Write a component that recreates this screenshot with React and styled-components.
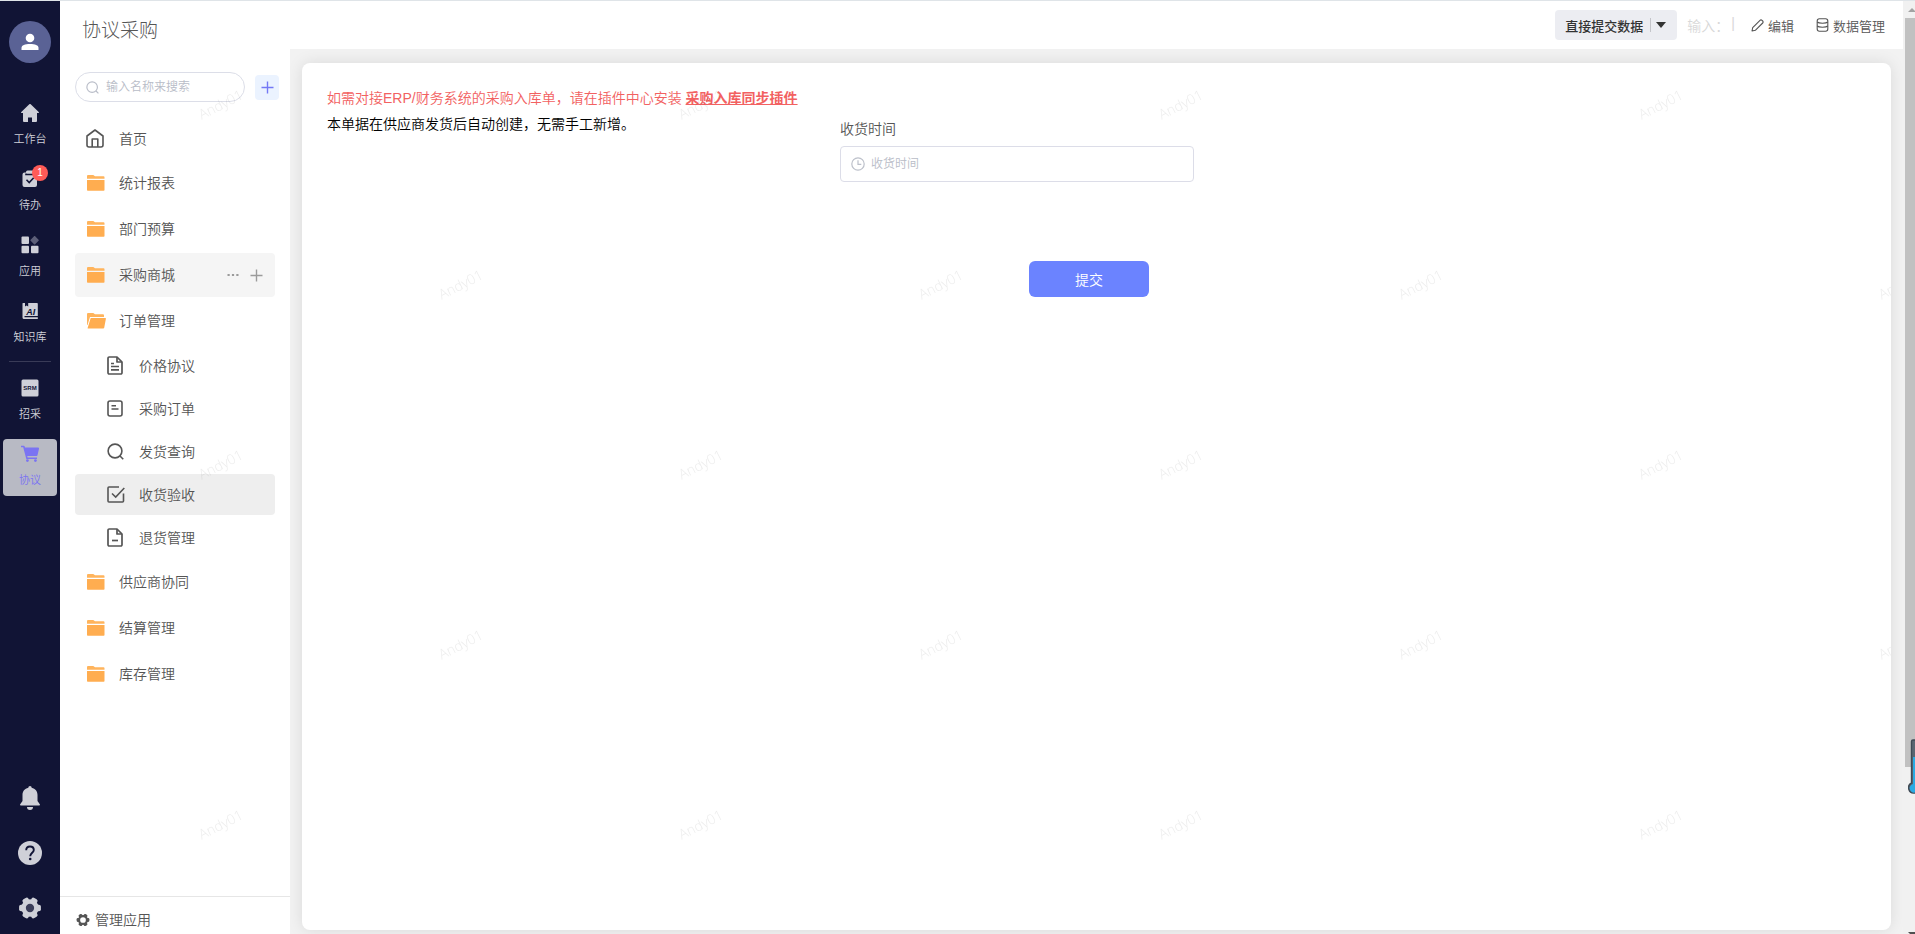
import React, { useState } from 'react';
import styled, { createGlobalStyle } from 'styled-components';

const GlobalStyle = createGlobalStyle`
  * {
    box-sizing: border-box;
  }
  body {
    margin: 0;
    font-family: "Liberation Sans", "Noto Sans CJK SC", sans-serif;
    font-size: 14px;
    font-weight: 350;
    color: #555;
  }
  button, input {
    font-family: inherit;
    font-weight: inherit;
    margin: 0;
  }
  a {
    color: inherit;
    text-decoration: none;
  }
  svg {
    display: block;
    flex-shrink: 0;
  }
`;

const Page = styled.div`
  position: relative;
  display: flex;
  height: 100vh;
  overflow: hidden;
  border-top: 1px solid #dfe4e8;
  background: #f2f2f2;
`;

/* ---------- dark rail ---------- */

const Rail = styled.nav`
  display: flex;
  flex-direction: column;
  align-items: center;
  flex-shrink: 0;
  width: 60px;
  padding: 20px 3px 14px;
  background: #111435;
  color: #cfd0d8;
`;

const Avatar = styled.button`
  display: flex;
  align-items: center;
  justify-content: center;
  flex-shrink: 0;
  width: 42px;
  height: 42px;
  margin-bottom: 35px;
  padding: 0;
  border: none;
  border-radius: 50%;
  background: #5a6295;
  cursor: pointer;
`;

const RailGroup = styled.div`
  display: flex;
  flex-direction: column;
  gap: 9px;
  width: 100%;
`;

const RailItem = styled.a`
  display: flex;
  flex-direction: column;
  align-items: center;
  gap: 8px;
  height: 57px;
  padding-top: 6px;
  border-radius: 4px;
  background: ${({ $active }) => ($active ? '#b8bac4' : 'transparent')};
  color: ${({ $active }) => ($active ? '#7b74f2' : '#cfd0d8')};
  font-size: 11px;
  line-height: 18px;
`;

const RailIcon = styled.span`
  position: relative;
  display: block;
`;

const Badge = styled.span`
  position: absolute;
  top: -5px;
  right: -9px;
  width: 16px;
  height: 16px;
  border-radius: 50%;
  background: #ff5b57;
  color: #fff;
  font-size: 10px;
  line-height: 16px;
  text-align: center;
`;

const RailDivider = styled.hr`
  width: 42px;
  margin: 8px 0 11px;
  border: none;
  border-top: 1px solid #393b57;
`;

const RailBottom = styled.div`
  display: flex;
  flex-direction: column;
  align-items: center;
  gap: 31px;
  margin-top: auto;
`;

const RailButton = styled.button`
  padding: 0;
  border: none;
  background: none;
  color: inherit;
  cursor: pointer;
`;

/* ---------- app sidebar ---------- */

const Sidebar = styled.aside`
  position: relative;
  display: flex;
  flex-direction: column;
  flex-shrink: 0;
  width: 230px;
  background: #fff;
`;

const AppTitle = styled.h1`
  margin: 0;
  padding: 16px 22px 0;
  font-size: 19px;
  font-weight: 300;
  line-height: 28px;
  color: #555;
`;

const SearchRow = styled.div`
  display: flex;
  align-items: center;
  gap: 10px;
  padding: 27px 11px 0 15px;
`;

const SearchBox = styled.label`
  display: flex;
  align-items: center;
  flex: 1;
  min-width: 0;
  gap: 7px;
  height: 30px;
  padding: 0 10px;
  border: 1px solid #dcdee8;
  border-radius: 15px;
  color: #b9bdc8;
`;

const PlainInput = styled.input`
  flex: 1;
  min-width: 0;
  padding: 0;
  border: none;
  outline: none;
  background: none;
  font-size: 12px;
  color: #555;
  &::placeholder {
    color: #b8bcc7;
    opacity: 1;
  }
`;

const AddButton = styled.button`
  display: flex;
  align-items: center;
  justify-content: center;
  flex-shrink: 0;
  width: 24px;
  height: 25px;
  padding: 0;
  border: none;
  border-radius: 4px;
  background: #ebf3ff;
  color: #7479f5;
  cursor: pointer;
`;

const Menu = styled.ul`
  display: flex;
  flex-direction: column;
  gap: 2px;
  flex: 1;
  margin: 0;
  padding: 16px 15px 0;
  list-style: none;
`;

const MenuRow = styled.li`
  display: flex;
  align-items: center;
  height: ${({ $folder }) => ($folder ? '44px' : '41px')};
  padding: 0 12px 0 ${({ $child }) => ($child ? '32px' : '11px')};
  border-radius: 4px;
  background: ${({ $bg }) => $bg || 'transparent'};
`;

const MenuLink = styled.a`
  display: flex;
  align-items: center;
  flex: 1;
  line-height: 20px;
  color: #555;
`;

const MenuIcon = styled.span`
  display: flex;
  width: ${({ $child }) => ($child ? '32px' : '33px')};
`;

const RowActions = styled.span`
  display: flex;
  align-items: center;
  gap: 11px;
  color: #9b9b9b;
`;

const RowAction = styled.button`
  padding: 0;
  border: none;
  background: none;
  color: inherit;
  cursor: pointer;
`;

const SidebarFooter = styled.a`
  display: flex;
  align-items: center;
  gap: 5px;
  padding: 13px 16px 4px;
  border-top: 1px solid #e6e6e6;
  line-height: 20px;
`;

/* ---------- main area ---------- */

const Main = styled.main`
  display: flex;
  flex-direction: column;
  flex: 1;
  min-width: 0;
`;

const Header = styled.header`
  display: flex;
  align-items: center;
  justify-content: flex-end;
  height: 48px;
  padding-right: 18px;
  background: #fff;
  font-size: 13px;
`;

const ModeButton = styled.button`
  display: flex;
  align-items: center;
  height: 30px;
  margin-right: 10px;
  padding: 0 11px 0 10px;
  border: none;
  border-radius: 4px;
  background: #ecedf2;
  font-size: 13px;
  font-weight: 500;
  color: #333;
  cursor: pointer;
`;

const ModeDivider = styled.span`
  width: 1px;
  height: 14px;
  margin: 0 5px 0 7px;
  background: #c4c5ca;
`;

const InputHint = styled.span`
  display: flex;
  gap: 2px;
  margin-right: 16px;
  font-size: 14px;
  color: #d8d8d8;
`;

const HeaderLink = styled.a`
  display: flex;
  align-items: center;
  gap: 4px;
  color: #555;
  & + & {
    margin-left: 22px;
  }
`;

const Body = styled.div`
  display: flex;
  flex: 1;
  padding: 14px 12px 4px;
`;

const Card = styled.section`
  flex: 1;
  padding: 22px 40px 22px 25px;
  border-radius: 8px;
  background: #fff;
  box-shadow: 0 0 16px rgba(0, 0, 0, 0.1);
`;

const FormGrid = styled.form`
  display: grid;
  grid-template-columns: repeat(3, 1fr);
  column-gap: 15px;
`;

const Notice = styled.div`
  white-space: nowrap;
  line-height: 26px;
  color: #000;
`;

const NoticeLine = styled.p`
  margin: 0;
  color: ${({ $warn }) => ($warn ? '#f26161' : '#000')};
  a {
    font-weight: 700;
    text-decoration: underline;
  }
`;

const Field = styled.div`
  display: flex;
  flex-direction: column;
  gap: 7px;
  padding-top: 34px;
`;

const FieldLabel = styled.label`
  line-height: 20px;
  color: #555;
`;

const FieldBox = styled.div`
  display: flex;
  align-items: center;
  gap: 6px;
  max-width: 354px;
  height: 36px;
  padding: 0 10px;
  border: 1px solid #dcdde8;
  border-radius: 4px;
  color: #bcc0ca;
`;

const Actions = styled.div`
  grid-column: 1 / -1;
  display: flex;
  justify-content: center;
  padding-top: 79px;
`;

const SubmitButton = styled.button`
  width: 120px;
  height: 36px;
  border: none;
  border-radius: 6px;
  background: #6b83ff;
  font-size: 14px;
  color: #fff;
  cursor: pointer;
`;

/* ---------- scrollbar, watermark, side widget ---------- */

const ScrollTrack = styled.div`
  display: flex;
  flex-direction: column;
  align-items: flex-end;
  flex-shrink: 0;
  width: 12px;
  background: #f1f1f1;
`;

const ScrollArrow = styled.span`
  display: flex;
  align-items: center;
  height: 17px;
`;

const ScrollThumb = styled.div`
  width: 10px;
  height: calc(80% + 3px);
  margin-bottom: auto;
  background: #c1c1c1;
`;

const Watermark = styled.svg`
  position: absolute;
  top: 0;
  left: 60px;
  width: calc(100% - 84px);
  height: 100%;
  pointer-events: none;
`;

const Thermometer = styled.svg`
  position: absolute;
  right: 0;
  bottom: 139px;
`;

/* ---------- icons ---------- */

const UserIcon = () => (
  <svg width="18" height="18" viewBox="0 0 18 18" fill="#fff">
    <circle cx="9" cy="5" r="4.3" />
    <path d="M.5 17v-2.2C.5 12.200 4 11 9 11s8.500 1.200 8.500 3.800V17z" />
  </svg>
);

const HomeSolidIcon = () => (
  <svg width="18" height="18" viewBox="0 0 18 18" fill="currentColor">
    <path d="M8.300.3a1 1 0 0 1 1.400 0l8 7.600c.5.500.2 1.100-.4 1.100H16v8a1 1 0 0 1-1 1h-4v-4.500H7V18H3a1 1 0 0 1-1-1V9H.7C.1 9-.2 8.400.3 7.900z" />
  </svg>
);

const TodoIcon = () => (
  <svg width="18" height="18" viewBox="0 0 18 18">
    <path d="M3.500 2.500H5V2a1.500 1.500 0 0 1 1.500-1.500h5A1.500 1.500 0 0 1 13 2v.5h1a2 2 0 0 1 2 2V15a2 2 0 0 1-2 2H3.500a2 2 0 0 1-2-2V4.500a2 2 0 0 1 2-2z" fill="currentColor" />
    <path d="M5 3.500v1h8v-1M5.500 9.800l2.700 2.700 4.500-4.800" fill="none" stroke="#111435" strokeWidth="1.6" />
  </svg>
);

const AppsIcon = () => (
  <svg width="18" height="18" viewBox="0 0 18 18" fill="currentColor">
    <rect x=".5" y=".5" width="7.500" height="7.500" rx="1" />
    <rect x=".5" y="9.800" width="7.500" height="7.500" rx="1" />
    <rect x="10" y="9.800" width="7.500" height="7.500" rx="1" />
    <rect x="10.400" y="1" width="6.400" height="6.400" rx=".8" transform="rotate(45 13.600 4.200)" fill="#5d5f78" />
  </svg>
);

const AiIcon = () => (
  <svg width="18" height="18" viewBox="0 0 18 18">
    <path d="M2 1h2v3.600l1.600-1.200 1.600 1.200V1H16a.8.800 0 0 1 .8.800V14H3.500v1.200h13.300V17H3a1.500 1.500 0 0 1-1.500-1.500v-14A.5.500 0 0 1 2 1z" fill="currentColor" />
    <text x="9.800" y="12.500" fontFamily="Liberation Sans, sans-serif" fontSize="9" fontWeight="700" fontStyle="italic" textAnchor="middle" fill="#111435">AI</text>
  </svg>
);

const SrmIcon = () => (
  <svg width="18" height="18" viewBox="0 0 18 18">
    <rect x=".5" y=".5" width="17" height="17" rx="1.500" fill="currentColor" />
    <text x="9" y="11" fontFamily="Liberation Sans, sans-serif" fontSize="6" fontWeight="700" textAnchor="middle" fill="#111435">SRM</text>
  </svg>
);

const CartIcon = () => (
  <svg width="18" height="18" viewBox="0 0 18 18">
    <path d="M0 .8h2.800a1 1 0 0 1 .9.700l.3 1h13a1 1 0 0 1 1 1.200l-1.500 6.500a1 1 0 0 1-1 .8H6.200l.4 1.500H16V14H5.300L2.200 2.300H0z" fill="currentColor" />
    <circle cx="6.400" cy="15.600" r="1.400" fill="currentColor" />
    <circle cx="14.400" cy="15.600" r="1.400" fill="currentColor" />
  </svg>
);

const BellIcon = () => (
  <svg width="20" height="24" viewBox="0 0 20 24" fill="currentColor">
    <path d="M8.300 1.700a1.700 1.700 0 0 1 3.400 0c3.600.8 5.800 3.700 5.800 7.300v6l2.300 3.200c.4.600.1 1.300-.6 1.300H.8c-.7 0-1-.7-.6-1.300L2.500 15V9c0-3.600 2.200-6.500 5.800-7.300z" />
    <path d="M7 21h6a3 3 0 0 1-6 0z" />
  </svg>
);

const HelpIcon = () => (
  <svg width="24" height="24" viewBox="0 0 24 24">
    <circle cx="12" cy="12" r="12" fill="currentColor" />
    <path d="M8.200 9.300c0-2.300 1.600-3.800 3.800-3.800s3.800 1.500 3.800 3.500c0 2.600-3.600 3-3.600 6.300" fill="none" stroke="#111435" strokeWidth="1.900" />
    <circle cx="12.200" cy="18" r="1.300" fill="#111435" />
  </svg>
);

const GearIcon = ({ size, hole, r = 3.8 }) => (
  <svg width={size} height={size} viewBox="0 0 22 22">
    <g fill="currentColor">
      <circle cx="11" cy="11" r="8" />
      {[30, 90, 150, 210, 270, 330].map((deg) => (
        <rect key={deg} x="8" y="1" width="6" height="5" rx="1.800" transform={`rotate(${deg} 11 11)`} />
      ))}
    </g>
    <circle cx="11" cy="11" r={r} fill={hole} />
  </svg>
);

const SearchIcon = ({ size = 13, stroke = 1 }) => (
  <svg width={size} height={size} viewBox="0 0 18 18" fill="none" stroke="currentColor" strokeWidth={stroke}>
    <circle cx="8.500" cy="8.500" r="7.300" />
    <path d="M13.800 13.800 17.200 17.200" />
  </svg>
);

const PlusIcon = ({ size = 13 }) => (
  <svg width={size} height={size} viewBox="0 0 13 13" stroke="currentColor" strokeWidth="1.400">
    <path d="M6.500.5v12M.5 6.500h12" />
  </svg>
);

const DotsIcon = () => (
  <svg width="12" height="4" viewBox="0 0 12 4" fill="currentColor">
    <rect x=".5" y="1" width="2.200" height="2" />
    <rect x="4.900" y="1" width="2.200" height="2" />
    <rect x="9.300" y="1" width="2.200" height="2" />
  </svg>
);

const HomeIcon = () => (
  <svg width="18" height="19" viewBox="0 0 18 19" fill="none" stroke="#555" strokeWidth="1.600" strokeLinejoin="round">
    <path d="M9 1 1 7v9a2 2 0 0 0 2 2h12a2 2 0 0 0 2-2V7z" />
    <path d="M6.200 18v-8h5.600v8" />
  </svg>
);

const FolderIcon = () => (
  <svg width="20" height="17" viewBox="0 0 20 17">
    <path d="M1 1a1 1 0 0 1 1-1h5.300L9 1.300h8.500a1 1 0 0 1 1 1V3.800H1z" fill="#ffb45c" />
    <path d="M1 5h17.500V15a.8.800 0 0 1-.8.800H1.800A.8.800 0 0 1 1 15z" fill="#ffad50" />
  </svg>
);

const FolderOpenIcon = () => (
  <svg width="20" height="17" viewBox="0 0 20 17">
    <path d="M1 1a1 1 0 0 1 1-1h5.300L9 1.300h8a1 1 0 0 1 1 1V4H4L1.500 12H1z" fill="#ffb45c" />
    <path d="M4.700 5H19.300a.6.600 0 0 1 .6.800l-1.700 9a1 1 0 0 1-1 .8H2.300a.6.600 0 0 1-.6-.8z" fill="#ffad50" />
  </svg>
);

const DocIcon = ({ lines }) => (
  <svg width="16" height="19" viewBox="0 0 16 19" fill="none" stroke="#555" strokeWidth="1.700" strokeLinejoin="round">
    <path d="M2.200 1H10l5 5v10.800A1.200 1.200 0 0 1 13.800 18H2.200A1.200 1.200 0 0 1 1 16.800V2.200A1.200 1.200 0 0 1 2.200 1z" />
    <path d="M10 1v5h5" />
    <path d={lines} />
  </svg>
);

const OrderIcon = () => (
  <svg width="16" height="17" viewBox="0 0 16 17" fill="none" stroke="#555" strokeWidth="1.600">
    <rect x="1" y="1" width="14" height="15" rx="2" />
    <path d="M4.500 5.800h4.500M4.500 9h7" />
  </svg>
);

const CheckIcon = () => (
  <svg width="18" height="17" viewBox="0 0 18 17" fill="none" stroke="#555" strokeWidth="1.600">
    <path d="M12 1H2a1 1 0 0 0-1 1v13a1 1 0 0 0 1 1h13.500a1 1 0 0 0 1-1V7.500" />
    <path d="m5 7.500 3.700 3.500L17.300 2" />
  </svg>
);

const ClockIcon = () => (
  <svg width="14" height="14" viewBox="0 0 14 14" fill="none" stroke="currentColor" strokeWidth="1.200">
    <circle cx="7" cy="7" r="6.200" />
    <path d="M7 3.300v4h3.300" />
  </svg>
);

const PencilIcon = () => (
  <svg width="13" height="13" viewBox="0 0 13 13" fill="none" stroke="#555" strokeWidth="1.100" strokeLinejoin="round">
    <path d="M1 12l.7-3.300L9 1.300a1.400 1.400 0 0 1 2 0l.7.700a1.400 1.400 0 0 1 0 2L4.300 11.300z" />
  </svg>
);

const DatabaseIcon = () => (
  <svg width="13" height="14" viewBox="0 0 12 14" fill="none" stroke="#555" strokeWidth="1.100">
    <rect x=".7" y=".8" width="10.600" height="12.400" rx="2.200" />
    <path d="M.7 4c1 1 3 1.200 5.300 1.200S10.300 5 11.300 4M.7 8c1 1 3 1.200 5.300 1.200S10.300 9 11.300 8" />
  </svg>
);

/* ---------- data ---------- */

const railTop = [
  { label: '工作台', icon: <HomeSolidIcon /> },
  { label: '待办', icon: <TodoIcon />, badge: 1 },
  { label: '应用', icon: <AppsIcon /> },
  { label: '知识库', icon: <AiIcon /> },
];

const railApps = [
  { label: '招采', icon: <SrmIcon /> },
  { label: '协议', icon: <CartIcon />, active: true },
];

const menu = [
  { label: '首页', icon: <HomeIcon /> },
  { label: '统计报表', folder: true },
  { label: '部门预算', folder: true },
  { label: '采购商城', folder: true, bg: '#f5f5f5', actions: true },
  { label: '订单管理', folder: true, icon: <FolderOpenIcon /> },
  { label: '价格协议', child: true, icon: <DocIcon lines="M4 7.500h3M4 10.500h8M4 13.800h8" /> },
  { label: '采购订单', child: true, icon: <OrderIcon /> },
  { label: '发货查询', child: true, icon: <SearchIcon size={17} stroke={1.7} /> },
  { label: '收货验收', child: true, icon: <CheckIcon />, bg: '#eeeeee' },
  { label: '退货管理', child: true, icon: <DocIcon lines="M5 12.500h6" /> },
  { label: '供应商协同', folder: true },
  { label: '结算管理', folder: true },
  { label: '库存管理', folder: true },
];

const RailLinks = ({ items }) => (
  <RailGroup>
    {items.map((item) => (
      <RailItem key={item.label} href="#" $active={item.active}>
        <RailIcon>
          {item.icon}
          {item.badge && <Badge>{item.badge}</Badge>}
        </RailIcon>
        {item.label}
      </RailItem>
    ))}
  </RailGroup>
);

const App = () => {
  const [keyword, setKeyword] = useState('');
  const [receiveTime, setReceiveTime] = useState('');

  return (
    <>
      <GlobalStyle />
      <Page>
        <Rail>
          <Avatar aria-label="个人中心"><UserIcon /></Avatar>
          <RailLinks items={railTop} />
          <RailDivider />
          <RailLinks items={railApps} />
          <RailBottom>
            <RailButton aria-label="通知"><BellIcon /></RailButton>
            <RailButton aria-label="帮助"><HelpIcon /></RailButton>
            <RailButton aria-label="设置"><GearIcon size={24} hole="#3b3d59" /></RailButton>
          </RailBottom>
        </Rail>

        <Sidebar>
          <AppTitle>协议采购</AppTitle>
          <SearchRow>
            <SearchBox>
              <SearchIcon stroke={1.6} />
              <PlainInput
                aria-label="搜索"
                placeholder="输入名称来搜索"
                value={keyword}
                onChange={(e) => setKeyword(e.target.value)}
              />
            </SearchBox>
            <AddButton aria-label="新增"><PlusIcon /></AddButton>
          </SearchRow>
          <Menu>
            {menu.map((item) => (
              <MenuRow key={item.label} $folder={item.folder} $child={item.child} $bg={item.bg}>
                <MenuLink href="#">
                  <MenuIcon $child={item.child}>{item.icon || <FolderIcon />}</MenuIcon>
                  {item.label}
                </MenuLink>
                {item.actions && (
                  <RowActions>
                    <RowAction aria-label="更多"><DotsIcon /></RowAction>
                    <RowAction aria-label="新增子项"><PlusIcon /></RowAction>
                  </RowActions>
                )}
              </MenuRow>
            ))}
          </Menu>
          <SidebarFooter href="#">
            <GearIcon size={14} hole="#fff" r={4.5} />
            管理应用
          </SidebarFooter>
        </Sidebar>

        <Main>
          <Header>
            <ModeButton>
              直接提交数据
              <ModeDivider />
              <svg width="10" height="6" viewBox="0 0 10 6"><path d="M0 0h10L5 6z" fill="#333" /></svg>
            </ModeButton>
            <InputHint><span>输入：</span><span>|</span></InputHint>
            <HeaderLink href="#"><PencilIcon />编辑</HeaderLink>
            <HeaderLink href="#"><DatabaseIcon />数据管理</HeaderLink>
          </Header>
          <Body>
            <Card>
              <FormGrid onSubmit={(e) => e.preventDefault()}>
                <Notice>
                  <NoticeLine $warn>
                    如需对接ERP/财务系统的采购入库单，请在插件中心安装 <a href="#">采购入库同步插件</a>
                  </NoticeLine>
                  <NoticeLine>本单据在供应商发货后自动创建，无需手工新增。</NoticeLine>
                </Notice>
                <Field>
                  <FieldLabel htmlFor="receiveTime">收货时间</FieldLabel>
                  <FieldBox>
                    <ClockIcon />
                    <PlainInput
                      id="receiveTime"
                      placeholder="收货时间"
                      value={receiveTime}
                      onChange={(e) => setReceiveTime(e.target.value)}
                    />
                  </FieldBox>
                </Field>
                <Actions>
                  <SubmitButton type="submit">提交</SubmitButton>
                </Actions>
              </FormGrid>
            </Card>
          </Body>
        </Main>

        <ScrollTrack>
          <ScrollArrow>
            <svg width="7" height="4" viewBox="0 0 7 4"><path d="M0 4 4 0l3 3v1z" fill="#a3a3a3" /></svg>
          </ScrollArrow>
          <ScrollThumb />
          <svg width="7" height="2" viewBox="0 0 7 2"><path d="M0 0h7v2H2z" fill="#505050" /></svg>
        </ScrollTrack>

        <Watermark aria-hidden="true">
          <defs>
            <pattern id="mark" width="480" height="360" patternUnits="userSpaceOnUse">
              <g fill="#000" fillOpacity="0.08" fontFamily="Open Sans, sans-serif" fontSize="14" textAnchor="middle">
                <text x="163" y="108" transform="rotate(-27 163 108)">Andy01</text>
                <text x="403" y="288" transform="rotate(-27 403 288)">Andy01</text>
              </g>
            </pattern>
          </defs>
          <rect width="100%" height="100%" fill="url(#mark)" />
        </Watermark>

        <Thermometer width="7" height="56" viewBox="0 0 7 56">
          <path d="M3.500 44V2.500A1.500 1.500 0 0 1 5 1h4v53H6.500a5.300 5.300 0 0 1-3-10z" fill="#5a6672" stroke="#3f4a55" strokeWidth="1.400" />
          <path d="M5 18h2v35.500a4.300 4.300 0 0 1-2-8.400z" fill="#2aabe4" />
        </Thermometer>
      </Page>
    </>
  );
};

export default App;
